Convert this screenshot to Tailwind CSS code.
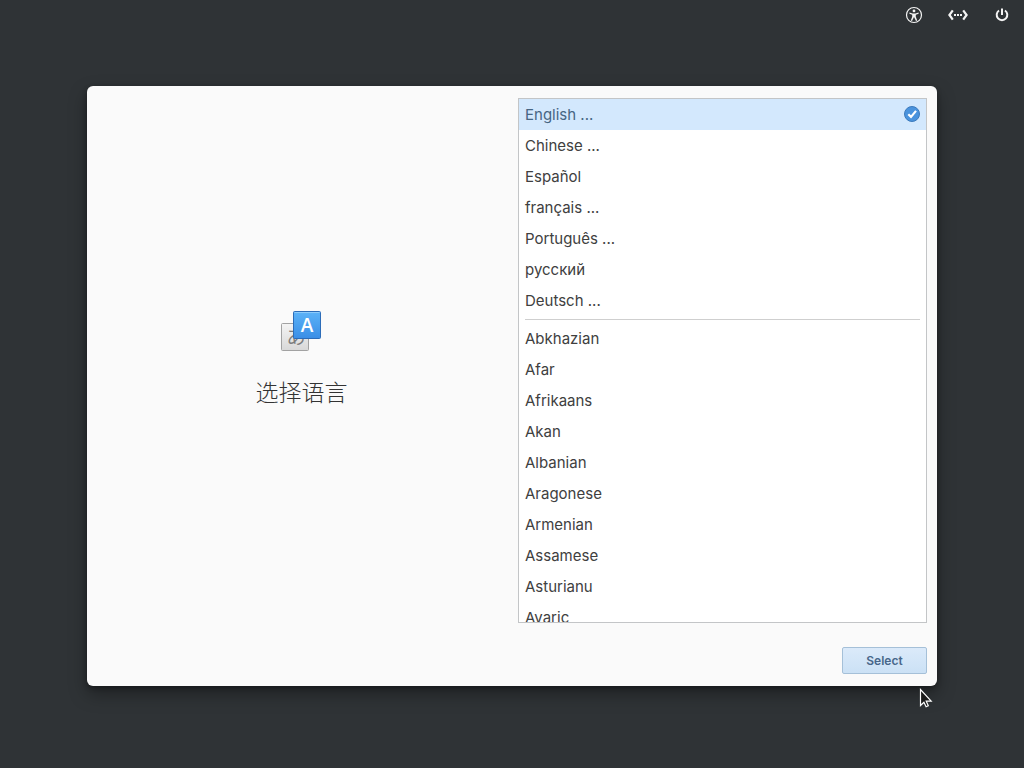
<!DOCTYPE html>
<html lang="zh-CN">
<head>
    <meta charset="UTF-8">
    <meta name="viewport" content="width=device-width, initial-scale=1.0">
    <title>选择语言</title>
    <script src="https://cdn.jsdelivr.net/npm/@tailwindcss/browser@4"></script>
</head>
<body class="relative flex flex-col h-screen overflow-hidden bg-[#2f3336] font-['Inter','Noto_Sans_CJK_SC',sans-serif] text-[15px] text-[#404040]">

    <header class="flex justify-end items-center gap-6 h-[30px] px-3 text-[#f4f4f4]">
        <button aria-label="Accessibility">
            <svg class="w-5 h-5" viewBox="0 0 20 20" fill="none" stroke="currentColor">
                <circle cx="10" cy="10" r="7.5" stroke-width="1.2"/>
                <circle cx="10" cy="5.9" r="1.4" fill="currentColor" stroke="none"/>
                <path d="M5.4 7.6l3.2.8h2.8l3.2-.8v1.2l-2.8 1v2l1.4 3.6-1.2.5-2-3.8-2 3.8-1.2-.5 1.4-3.6v-2l-2.8-1z" fill="currentColor" stroke="none"/>
            </svg>
        </button>
        <button aria-label="Network">
            <svg class="w-5 h-5" viewBox="0 0 20 20" fill="none" stroke="currentColor" stroke-width="2.2">
                <path d="M4.8 5.3L1.4 10l3.4 4.7M15.2 5.3l3.4 4.7-3.4 4.7"/>
                <path d="M6 9h2v2H6zM9 9h2v2H9zM12 9h2v2h-2z" fill="currentColor" stroke="none"/>
            </svg>
        </button>
        <button aria-label="Power">
            <svg class="w-5 h-5" viewBox="0 0 20 20" fill="none" stroke="currentColor" stroke-width="2">
                <path d="M7 5.5a5.3 5.3 0 1 0 6 0M10 3.5v6.5"/>
            </svg>
        </button>
    </header>

    <main class="flex flex-col flex-1 min-h-0 px-[87px] pt-14 pb-[82px]">
        <form class="flex flex-col flex-1 min-h-0 gap-6 px-2.5 py-3 bg-[#fafafa] rounded-md shadow-[0_8px_18px_rgba(0,0,0,0.35),0_2px_5px_rgba(0,0,0,0.3)]">
            <div class="grid grid-cols-2 gap-3 flex-1 min-h-0">
                <div class="flex flex-col items-center justify-center gap-5 pb-[3px]">
                    <svg class="w-12 h-12" viewBox="1 0 48 48">
                        <defs>
                            <linearGradient id="blue" x1="0" y1="0" x2="0" y2="1">
                                <stop offset="0" stop-color="#5cb3f8"/>
                                <stop offset="1" stop-color="#3a8ee6"/>
                            </linearGradient>
                            <linearGradient id="grey" x1="0" y1="0" x2="0" y2="1">
                                <stop offset="0" stop-color="#f4f4f4"/>
                                <stop offset="1" stop-color="#d8d8d8"/>
                            </linearGradient>
                        </defs>
                        <rect x="4.5" y="16.5" width="27" height="27" rx="1" fill="url(#grey)" stroke="#a2a2a2"/>
                        <text x="19" y="37" text-anchor="middle" font-family="Noto Sans CJK JP, sans-serif" font-size="19" fill="#7c7c7c">あ</text>
                        <rect x="16.5" y="4.5" width="27" height="27" rx="1" fill="url(#blue)" stroke="#2c6cb8"/>
                        <path d="M17.5 5.5h25" stroke="#8ccbfb"/>
                        <text x="30" y="25" text-anchor="middle" font-family="Open Sans, sans-serif" font-size="19" font-weight="600" fill="#fff">A</text>
                    </svg>
                    <h1 class="text-[23px] leading-9 font-light text-[#333]">选择语言</h1>
                </div>

                <div class="min-h-0 overflow-hidden bg-white border border-[#c3c5c7] leading-8" role="radiogroup" aria-label="选择语言">
                    <label class="flex items-start justify-between h-[31px] px-1.5 bg-[#d3e8fd] text-[#466583]">English ...
                        <input type="radio" name="lang" class="sr-only" checked>
                        <svg class="w-4 h-4 mt-[7px]" viewBox="0 0 16 16">
                            <circle cx="8" cy="8" r="7.5" fill="#4a93dd" stroke="#3c7abc"/>
                            <path d="M4.3 8.2l2.7 2.7 5-6" fill="none" stroke="#fff" stroke-width="2.2"/>
                        </svg>
                    </label>
                    <label class="flex items-start h-[31px] px-1.5">Chinese ...<input type="radio" name="lang" class="sr-only"></label>
                    <label class="flex items-start h-[31px] px-1.5">Español<input type="radio" name="lang" class="sr-only"></label>
                    <label class="flex items-start h-[31px] px-1.5">français ...<input type="radio" name="lang" class="sr-only"></label>
                    <label class="flex items-start h-[31px] px-1.5">Português ...<input type="radio" name="lang" class="sr-only"></label>
                    <label class="flex items-start h-[31px] px-1.5">русский<input type="radio" name="lang" class="sr-only"></label>
                    <label class="flex items-start h-[31px] px-1.5">Deutsch ...<input type="radio" name="lang" class="sr-only"></label>
                    <hr class="mx-1.5 my-[3px] border-[#cfcfcf]">
                    <label class="flex items-start h-[31px] px-1.5">Abkhazian<input type="radio" name="lang" class="sr-only"></label>
                    <label class="flex items-start h-[31px] px-1.5">Afar<input type="radio" name="lang" class="sr-only"></label>
                    <label class="flex items-start h-[31px] px-1.5">Afrikaans<input type="radio" name="lang" class="sr-only"></label>
                    <label class="flex items-start h-[31px] px-1.5">Akan<input type="radio" name="lang" class="sr-only"></label>
                    <label class="flex items-start h-[31px] px-1.5">Albanian<input type="radio" name="lang" class="sr-only"></label>
                    <label class="flex items-start h-[31px] px-1.5">Aragonese<input type="radio" name="lang" class="sr-only"></label>
                    <label class="flex items-start h-[31px] px-1.5">Armenian<input type="radio" name="lang" class="sr-only"></label>
                    <label class="flex items-start h-[31px] px-1.5">Assamese<input type="radio" name="lang" class="sr-only"></label>
                    <label class="flex items-start h-[31px] px-1.5">Asturianu<input type="radio" name="lang" class="sr-only"></label>
                    <label class="flex items-start h-[31px] px-1.5">Avaric<input type="radio" name="lang" class="sr-only"></label>
                </div>
            </div>

            <div class="flex justify-end">
                <button type="button" class="w-[85px] h-[27px] rounded-xs border border-[#a5c0d8] bg-linear-to-b from-[#dbeafa] to-[#cbe1f5] text-xs font-semibold text-[#48678a]">Select</button>
            </div>
        </form>
    </main>

    <!-- mouse pointer -->
    <svg class="absolute left-[919px] top-[688px] w-4 h-5" viewBox="0 0 16 20">
        <path d="M1.5 1.5v16l3.4-3.3 2.2 4.6 2.2-1-2.1-4.6h5z" fill="#1b1b1b" stroke="#fff" stroke-width="1.2"/>
    </svg>

</body>
</html>
